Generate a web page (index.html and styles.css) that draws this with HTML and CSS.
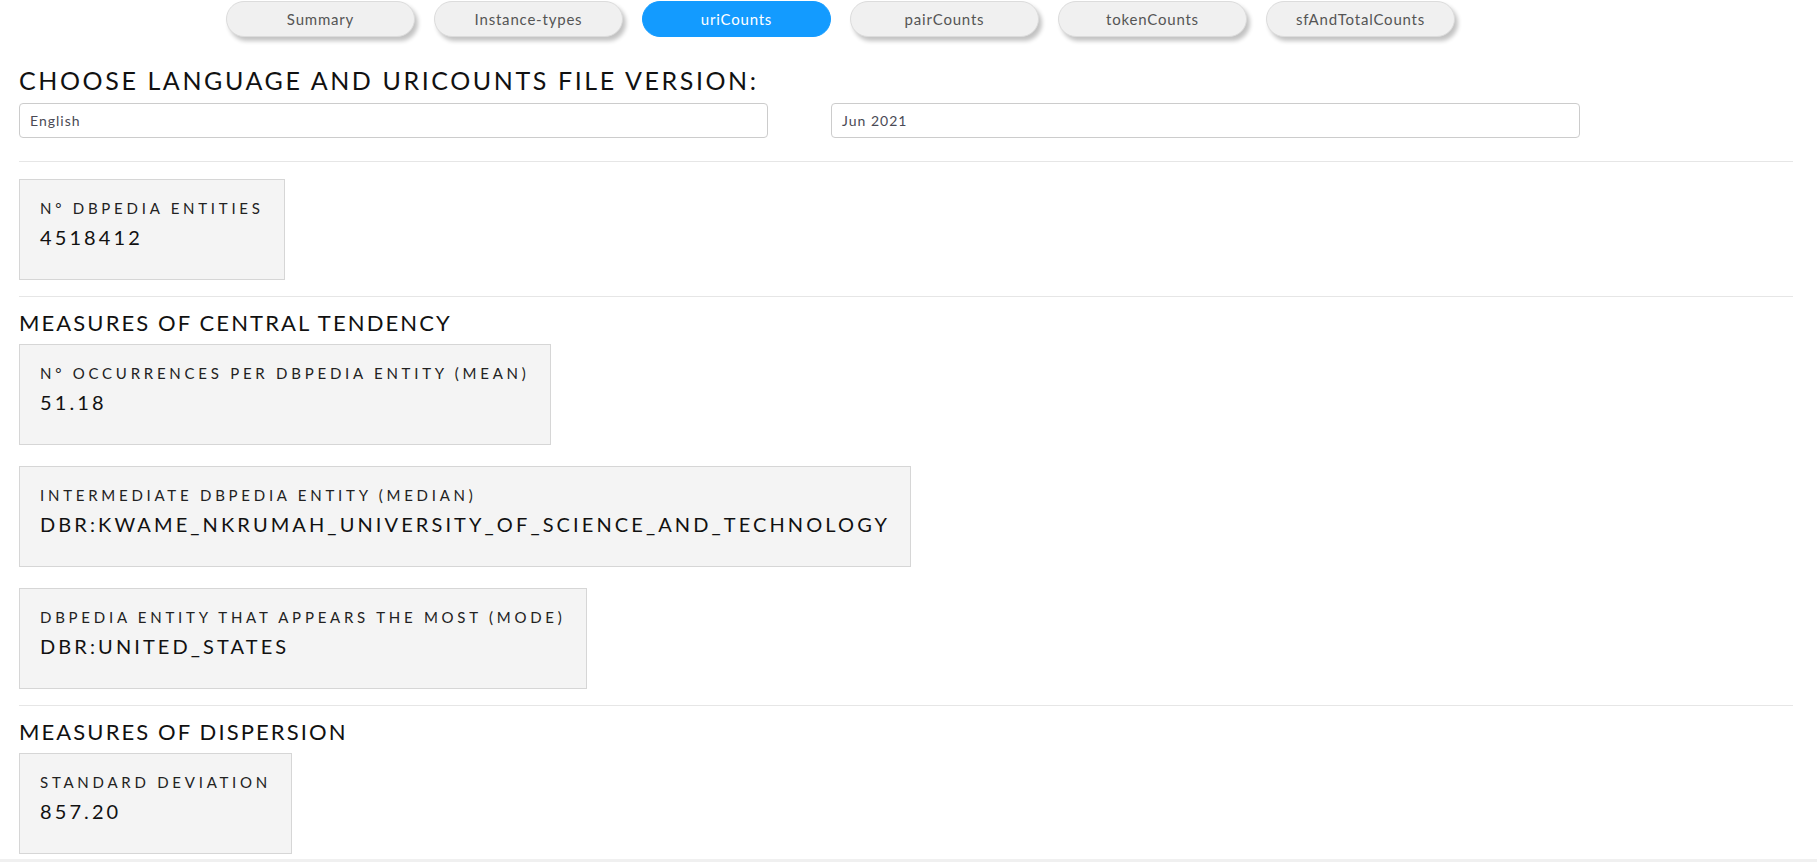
FILE: index.html
```html
<!DOCTYPE html>
<html lang="en">
<head>
<meta charset="utf-8">
<title>uriCounts</title>
<link rel="stylesheet" href="styles.css">
</head>
<body>
<nav class="tabs">
  <button class="tab">Summary</button>
  <button class="tab">Instance-types</button>
  <button class="tab active">uriCounts</button>
  <button class="tab">pairCounts</button>
  <button class="tab">tokenCounts</button>
  <button class="tab">sfAndTotalCounts</button>
</nav>
<main class="main">
  <h1 class="page-title">Choose language and uriCounts file version:</h1>
  <div class="selectors">
    <div class="select">English</div>
    <div class="select">Jun 2021</div>
  </div>
  <hr class="rule">
  <section class="section">
    <div class="card">
      <div class="card-label">N° DBpedia entities</div>
      <div class="card-value">4518412</div>
    </div>
  </section>
  <hr class="rule">
  <section class="section">
    <h2 class="section-title">Measures of central tendency</h2>
    <div class="card">
      <div class="card-label">N° occurrences per DBpedia entity (mean)</div>
      <div class="card-value">51.18</div>
    </div>
    <div class="card">
      <div class="card-label">Intermediate DBpedia entity (median)</div>
      <div class="card-value">dbr:Kwame_Nkrumah_University_of_Science_and_Technology</div>
    </div>
    <div class="card">
      <div class="card-label">DBpedia entity that appears the most (mode)</div>
      <div class="card-value">dbr:United_States</div>
    </div>
  </section>
  <hr class="rule">
  <section class="section section-last">
    <h2 class="section-title">Measures of dispersion</h2>
    <div class="card">
      <div class="card-label">Standard deviation</div>
      <div class="card-value">857.20</div>
    </div>
  </section>
</main>
<footer class="footer"></footer>
</body>
</html>
```

FILE: styles.css
```css
html, body {
  margin: 0;
  padding: 0;
  background: #ffffff;
  font-family: Lato, "Open Sans", "Liberation Sans", sans-serif;
  color: #1a1a1a;
}

.tabs {
  display: flex;
  gap: 19px;
  padding: 1px 0 0 226px;
}

.tab {
  width: 189px;
  height: 36px;
  border-radius: 18px;
  border: 1px solid #dcdcdc;
  background: #f0f0f0;
  box-shadow: 3px 4px 4px rgba(0, 0, 0, 0.24);
  font-family: Lato, "Open Sans", sans-serif;
  font-size: 15px;
  letter-spacing: 0.8px;
  color: #555555;
  cursor: pointer;
  padding: 0;
}

.tab.active {
  background: #139bff;
  border-color: #139bff;
  color: #ffffff;
  box-shadow: none;
}

.main {
  padding: 0 24px 0 19px;
}

.page-title {
  margin: 28px 0 0 0;
  font-size: 25px;
  line-height: 30px;
  font-weight: 400;
  letter-spacing: 2.6px;
  text-transform: uppercase;
  color: #111111;
}

.selectors {
  display: flex;
  gap: 63px;
  margin-top: 8px;
}

.select {
  width: 749px;
  height: 35px;
  box-sizing: border-box;
  border: 1px solid #cccccc;
  border-radius: 4px;
  padding: 0 10px;
  display: flex;
  align-items: center;
  font-size: 14px;
  letter-spacing: 1px;
  color: #4a4a55;
}

.rule {
  border: 0;
  border-top: 1px solid #e6e6e6;
  margin: 23px 0 0 0;
  height: 0;
}

.section {
  display: flex;
  flex-direction: column;
  align-items: flex-start;
  gap: 21px;
  padding: 17px 0 16px 0;
}

.section-last {
  padding-bottom: 5px;
}

.section-title {
  margin: -5px 0 -14px 0;
  font-size: 22px;
  line-height: 28px;
  font-weight: 400;
  letter-spacing: 2.1px;
  text-transform: uppercase;
  color: #111111;
}

.card {
  box-sizing: border-box;
  min-height: 101px;
  background: #f4f4f4;
  border: 1px solid #d6d6d6;
  padding: 17px 20px 20px 20px;
}

.card-label {
  font-size: 15px;
  line-height: 22px;
  letter-spacing: 3.75px;
  text-transform: uppercase;
  color: #222222;
}

.card-value {
  margin-top: 4px;
  font-size: 20px;
  line-height: 28px;
  letter-spacing: 3.1px;
  text-transform: uppercase;
  color: #111111;
}

.section + .rule {
  margin-top: 0;
}

.footer {
  height: 40px;
  background: #f0f0f0;
}
```
